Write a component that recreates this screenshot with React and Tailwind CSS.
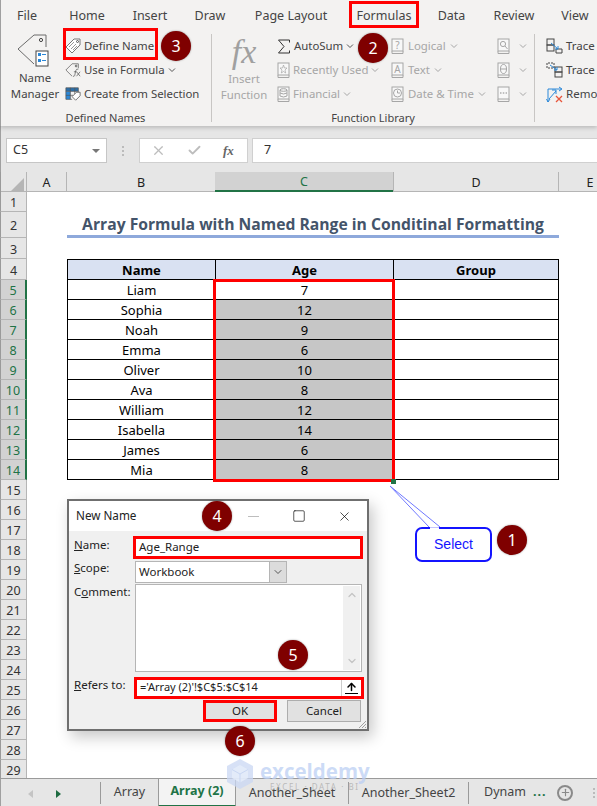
import React from "react";
import { ChevronDown, X, Check, Square, ArrowUp, Plus, ChevronUp } from "lucide-react";

const Badge = ({ n, className }) => (
  <div className={`absolute w-[30px] h-[30px] rounded-full bg-[#7f0000] text-white text-[16px] flex items-center justify-center shadow-[0_0_2px_rgba(0,0,0,0.4)] ${className}`}>{n}</div>
);

const Chev = ({ c = "#666" }) => (
  <svg width="8" height="6" viewBox="0 0 8 6" className="shrink-0"><path d="M1 1.5 L4 4.5 L7 1.5" fill="none" stroke={c} strokeWidth="1" /></svg>
);

const Book = ({ children }) => (
  <svg width="13" height="17" viewBox="0 0 13 17" className="shrink-0">
    <rect x="1" y="1" width="11" height="12" fill="#f8f8f8" stroke="#a6a6a6" />
    <path d="M1 13 V15.5 H12 V13" fill="none" stroke="#a6a6a6" />
    {children}
  </svg>
);

const NameManagerIcon = () => (
  <svg width="38" height="38" viewBox="0 0 38 38" className="-mt-[2px]">
    <path d="M2 17 L18 3 H30 V15 M18 32 L2 17" fill="none" stroke="#6b6b6b" strokeWidth="1" />
    <circle cx="25" cy="8" r="1.6" fill="none" stroke="#444" />
    <rect x="20" y="19" width="12" height="15" fill="#fff" stroke="#444" />
    <rect x="22" y="21" width="3" height="3" fill="#2b88d8" />
    <rect x="22" y="27" width="3" height="3" fill="#2b88d8" />
    <path d="M26 22.5 H30 M26 28.5 H30" stroke="#2b88d8" />
  </svg>
);
const TagIcon = () => (
  <svg width="16" height="16" viewBox="0 0 16 16" className="shrink-0">
    <path d="M1 9 L9 1 H15 V7 L7 15 Z" fill="#fff" stroke="#777" />
    <path d="M4 9 L9 4 M6 11 L11 6 M8 12 L12 8" stroke="#999" />
    <circle cx="12.5" cy="3.5" r="1" fill="none" stroke="#555" />
  </svg>
);
const UseIcon = () => (
  <svg width="16" height="16" viewBox="0 0 18 18" className="shrink-0">
    <path d="M1 9 L8 2 H15 V7 M8 16 L1 9" fill="none" stroke="#777" />
    <circle cx="12.5" cy="4.5" r="1" fill="none" stroke="#555" />
    <path d="M15 8 Q12.5 7.5 12 10 L11 15 Q10.5 16.5 9 16 M10 11 H13 M13 11 L17 16 M17 11 L13 16" fill="none" stroke="#555" strokeWidth=".8" />
  </svg>
);
const CreateIcon = () => (
  <svg width="16" height="16" viewBox="0 0 18 16" className="shrink-0">
    <rect x="1" y="1" width="14" height="4" fill="#2b6ea8" />
    <rect x="1" y="5" width="5" height="9" fill="#2b88d8" />
    <path d="M1 1 H15 V8 M1 1 V14 H8 M6 1 V14 M11 1 V8 M1 5 H15 M1 9.5 H9" fill="none" stroke="#555" strokeWidth=".8" />
    <path d="M8 11 L13 6 H17 V10 L12 15 Z" fill="#fff" stroke="#666" />
  </svg>
);
const Sigma = () => (
  <svg width="14" height="15" viewBox="0 0 14 15" className="shrink-0">
    <path d="M12.5 3.5 V1 H1.5 L7 7.5 L1.5 14 H12.5 V11.5" fill="none" stroke="#333" strokeWidth="1" />
  </svg>
);
const TraceA = () => (
  <svg width="17" height="16" viewBox="0 0 17 16" className="shrink-0">
    <rect x="1" y="1" width="7" height="6" fill="none" stroke="#444" />
    <rect x="1" y="7" width="7" height="6" fill="none" stroke="#444" />
    <path d="M10 15 V11 H16 V15 H10" fill="none" stroke="#444" />
    <path d="M5 5 L12 11 M12 8 V11 H9" fill="none" stroke="#2b88d8" />
  </svg>
);
const TraceB = () => (
  <svg width="17" height="16" viewBox="0 0 17 16" className="shrink-0">
    <path d="M1 6 V1 H8 V6 Z" fill="none" stroke="#444" strokeDasharray="2 1" />
    <rect x="9" y="5" width="7" height="5" fill="none" stroke="#444" />
    <rect x="9" y="10" width="7" height="5" fill="none" stroke="#444" />
    <path d="M4 3 L11 8 M11 5 V8 H8" fill="none" stroke="#2b88d8" />
  </svg>
);
const Remove = () => (
  <svg width="18" height="17" viewBox="0 0 18 17" className="shrink-0">
    <path d="M2 16 V3 H15 M13 1 L16 3 L13 5 M0.5 13 L2 16 L4 13 M3 13 L10 5 M6 4 H10 V8" fill="none" stroke="#2b88d8" />
    <path d="M10 10 L16 16 M16 10 L10 16" stroke="#e8553a" strokeWidth="1.3" />
  </svg>
);

const SmallBtn = ({ icon, label, chev, dim, extra = "gap-[3px]" }) => (
  <div className={`h-[24px] flex items-center whitespace-nowrap ${dim ? "text-[#a6a6a6]" : "text-[#444]"} ${extra}`}>
    {icon}
    {label && <span>{label}</span>}
    {chev && <Chev c={dim ? "#a6a6a6" : "#555"} />}
  </div>
);

const Tab = ({ children, w, active }) => (
  <div className={`flex items-center justify-center h-[27px] pt-[3px] shrink-0 text-[#444] text-[12.5px] ${w} ${active ? "outline-[3px] outline outline-[#ff0000] -outline-offset-[3px]" : ""}`}>{children}</div>
);

const Ribbon = () => (
  <div className="h-[126px] bg-[#f3f2f1] shadow-[0_2px_4px_rgba(0,0,0,0.18),inset_1px_0_0_#a0a0a0] relative z-10 text-[11.4px] shrink-0">
    <div className="h-[30px] flex items-start pt-[1px]">
      <Tab w="w-[54px]">File</Tab>
      <Tab w="w-[66px]">Home</Tab>
      <Tab w="w-[60px]">Insert</Tab>
      <Tab w="w-[60px]">Draw</Tab>
      <Tab w="w-[102px]">Page Layout</Tab>
      <div className="w-[7px] shrink-0" />
      <Tab w="w-[70px]" active>Formulas</Tab>
      <Tab w="w-[65px]">Data</Tab>
      <Tab w="w-[60px]">Review</Tab>
      <Tab w="w-[62px]">View</Tab>
    </div>
    <div className="h-[96px] flex pt-[4px]">
      <div className="w-[212px] shrink-0 flex flex-col border-r border-[#c8c6c4] h-[88px]">
        <div className="flex h-[72px]">
          <div className="w-[62px] pl-[8px] flex flex-col items-center text-[#444] leading-[16px] shrink-0">
            <NameManagerIcon />
            <span>Name</span>
            <span>Manager</span>
          </div>
          <div className="flex flex-col pl-[3px]">
            <SmallBtn icon={<TagIcon />} label="Define Name" />
            <SmallBtn icon={<UseIcon />} label="Use in Formula" chev />
            <SmallBtn icon={<CreateIcon />} label="Create from Selection" />
          </div>
        </div>
        <div className="text-center text-[#444] text-[11px] mt-[4px]">Defined Names</div>
      </div>
      <div className="w-[323px] shrink-0 flex flex-col border-r border-[#c8c6c4] h-[88px]">
        <div className="flex h-[72px]">
          <div className="w-[64px] flex flex-col items-center text-[#a6a6a6] leading-[16px] shrink-0">
            <span className="font-['Liberation_Serif',serif] italic text-[34px] leading-[36px] text-[#a0a0a0]">fx</span>
            <span className="mt-[1px]">Insert</span>
            <span>Function</span>
          </div>
          <div className="flex flex-col w-[115px] shrink-0 pl-[1px]">
            <SmallBtn icon={<Sigma />} label="AutoSum" chev extra="gap-[3px]" />
            <SmallBtn dim icon={<Book><path d="M6.5 3 L7.5 6 H10 L8 8 L8.7 11 L6.5 9.5 L4.3 11 L5 8 L3 6 H5.5 Z" fill="none" stroke="#a6a6a6" strokeWidth=".7" /></Book>} label="Recently Used" chev />
            <SmallBtn dim icon={<Book><ellipse cx="6.5" cy="4" rx="3.5" ry="1.3" fill="none" stroke="#a6a6a6" /><path d="M3 4 V10 Q6.5 12 10 10 V4 M3 7 Q6.5 9 10 7" fill="none" stroke="#a6a6a6" /></Book>} label="Financial" chev />
          </div>
          <div className="flex flex-col w-[106px] shrink-0">
            <SmallBtn dim extra="gap-[4px]" icon={<Book><text x="6.5" y="11" textAnchor="middle" fontSize="10" fill="#a6a6a6">?</text></Book>} label="Logical" chev />
            <SmallBtn dim extra="gap-[4px]" icon={<Book><text x="6.5" y="11" textAnchor="middle" fontSize="10" fill="#a6a6a6">A</text></Book>} label="Text" chev />
            <SmallBtn dim extra="gap-[4px]" icon={<Book><circle cx="6.5" cy="7" r="4" fill="none" stroke="#a6a6a6" /><path d="M6.5 4.5 V7 H9" fill="none" stroke="#a6a6a6" /></Book>} label="Date & Time" chev />
          </div>
          <div className="flex flex-col shrink-0">
            <SmallBtn dim extra="gap-[9px]" icon={<Book><circle cx="6" cy="6" r="2.6" fill="none" stroke="#a6a6a6" /><path d="M8 8 L10.5 11" stroke="#a6a6a6" /></Book>} chev />
            <SmallBtn dim extra="gap-[9px]" icon={<Book><ellipse cx="6.5" cy="7" rx="3" ry="4.5" fill="none" stroke="#a6a6a6" /><path d="M3.5 7 H9.5" stroke="#a6a6a6" /></Book>} chev />
            <SmallBtn dim extra="gap-[9px]" icon={<Book><path d="M3 7 H4.5 M5.8 7 H7.3 M8.6 7 H10" stroke="#888" /></Book>} chev />
          </div>
        </div>
        <div className="text-center text-[#444] text-[11px] mt-[4px]">Function Library</div>
      </div>
      <div className="pl-[11px] flex flex-col text-[11.5px]">
        <SmallBtn icon={<TraceA />} label="Trace" extra="gap-[3px]" />
        <SmallBtn icon={<TraceB />} label="Trace" extra="gap-[3px]" />
        <SmallBtn icon={<Remove />} label="Remo" extra="gap-[2px]" />
      </div>
    </div>
  </div>
);

const FormulaBar = () => (
  <div className="h-[46px] bg-[#e6e6e6] shadow-[inset_1px_0_0_#a0a0a0] flex items-start pt-[12px] pl-[6px] shrink-0 text-[12.5px] text-[#333]">
    <div className="w-[101px] h-[25px] bg-white border border-[#c6c6c6] flex items-center justify-between pl-[6px] pr-[6px] shrink-0">
      <span>C5</span>
      <span className="w-0 h-0 border-l-[4px] border-r-[4px] border-t-[4px] border-l-transparent border-r-transparent border-t-[#777]" />
    </div>
    <div className="w-[32px] h-[25px] flex items-center justify-center flex-col shrink-0">
      <span className="w-[2px] h-[2px] bg-[#bbb] mb-[2px]" />
      <span className="w-[2px] h-[2px] bg-[#bbb] mb-[2px]" />
      <span className="w-[2px] h-[2px] bg-[#bbb]" />
    </div>
    <div className="w-[109px] h-[25px] bg-white border border-[#d0d0d0] flex items-center shrink-0 pl-[11px]">
      <X size={15} className="text-[#bdbdbd]" strokeWidth={2} />
      <Check size={15} className="text-[#bdbdbd] ml-[21px]" strokeWidth={3} />
      <span className="ml-[21px] font-['Liberation_Serif',serif] italic font-bold text-[13px] text-[#666]">fx</span>
    </div>
    <div className="ml-[4px] flex-1 h-[25px] bg-white border border-[#d0d0d0] border-r-0 flex items-center pl-[11px]">7</div>
  </div>
);

const cols = "grid grid-cols-[27px_40px_148px_178px_166px_62px]";
const data = [["Liam", 7], ["Sophia", 12], ["Noah", 9], ["Emma", 6], ["Oliver", 10], ["Ava", 8], ["William", 12], ["Isabella", 14], ["James", 6], ["Mia", 8]];

const RowHead = ({ n, on }) => (
  <div className={`flex items-center justify-center pt-[4px] border-b border-[#b5b5b5] border-l border-l-[#9a9a9a] text-[12.5px] ${on ? "bg-[#d2d2d2] text-[#217346] border-r-2 border-r-[#217346]" : "bg-[#e6e6e6] text-[#333] border-r border-r-[#b5b5b5]"}`}>{n}</div>
);

const Sheet = () => {
  const rows = [];
  for (let i = 15; i <= 29; i++) {
    rows.push(<div key={i} className={`${cols} grid-rows-[20px]`}><RowHead n={i} /></div>);
  }
  return (
    <div className="flex-1 relative overflow-hidden bg-white text-[13px] text-black">
      <div className={`${cols} grid-rows-[20px] bg-[#e6e6e6] text-[12.5px] text-[#222] border-b border-[#b5b5b5] h-[20px]`}>
        <div className="border-r border-l border-r-[#b5b5b5] border-l-[#9a9a9a] flex items-end justify-end pr-[2px] pb-[1px]">
          <svg width="13" height="13" viewBox="0 0 13 13"><path d="M13 0 V13 H0 Z" fill="#b5b5b5" /></svg>
        </div>
        <div className="flex items-center justify-center pt-[2px] border-r border-[#b5b5b5]">A</div>
        <div className="flex items-center justify-center pt-[2px]">B</div>
        <div className="flex items-center justify-center pt-[2px] bg-[#d2d2d2] border-b-2 border-[#217346] text-[#217346]">C</div>
        <div className="flex items-center justify-center pt-[2px] border-r border-l border-[#b5b5b5]">D</div>
        <div className="flex items-center justify-center pt-[2px]">E</div>
      </div>
      <div className={`${cols} grid-rows-[20px]`}><RowHead n={1} /></div>
      <div className={`${cols} grid-rows-[26px]`}>
        <RowHead n={2} />
        <div />
        <div className="col-span-3 flex items-center justify-center pt-[2px] border-b-[3px] border-[#8ea9db] text-[#44546a] font-bold text-[15.7px] font-['Open_Sans',sans-serif] whitespace-nowrap">Array Formula with Named Range in Conditinal Formatting</div>
      </div>
      <div className={`${cols} grid-rows-[21px]`}><RowHead n={3} /></div>
      <div className={`${cols} grid-rows-[21px]`}>
        <RowHead n={4} />
        <div />
        <div className="bg-[#d9e1f2] border-y border-l border-black font-bold flex items-center justify-center pt-[3px]">Name</div>
        <div className="bg-[#d9e1f2] border-y border-l border-black font-bold flex items-center justify-center pt-[3px]">Age</div>
        <div className="bg-[#d9e1f2] border border-black font-bold flex items-center justify-center pt-[3px]">Group</div>
      </div>
      {data.map(([name, age], i) => (
        <div key={name} className={`${cols} grid-rows-[20px]`}>
          <RowHead n={i + 5} on />
          <div />
          <div className="border-b border-l border-black flex items-center justify-center pt-[3px]">{name}</div>
          <div className={`border-b border-l border-black flex items-center justify-center pt-[3px] ${i === 0 ? "bg-white" : "bg-[#c6c6c6]"}`}>{age}</div>
          <div className="border-b border-x border-black" />
        </div>
      ))}
      {rows}

      <div className="absolute left-[213px] top-[107px] w-[182px] h-[203px] border-[3px] border-[#ff0000]" />
      <div className="absolute left-[391px] top-[307px] w-[5px] h-[5px] bg-[#217346]" />
    </div>
  );
};

const Field = ({ className = "", children }) => (
  <div className={`bg-white flex items-center ${className}`}>{children}</div>
);

const Dialog = () => (
  <div className="absolute left-[67px] top-[499px] w-[302px] h-[232px] border-2 border-[#6f6f6f] bg-[#f0f0f0] shadow-[4px_6px_14px_rgba(0,0,0,0.22)] text-[11.5px] text-[#222] flex flex-col">
    <div className="h-[30px] bg-white flex items-center pl-[7px] shrink-0 text-[11.7px]">
      <span>New Name</span>
      <span className="ml-auto w-[11px] h-px bg-[#bdbdbd] mr-[33px]" />
      <Square size={14} strokeWidth={1.1} className="text-black mr-[31px]" />
      <X size={15} strokeWidth={1.1} className="text-black mr-[15px]" />
    </div>
    <div className="flex flex-col pl-[5px] pt-[4px]">
      <div className="flex h-[24px] items-center">
        <span className="w-[59px] shrink-0 -mt-[4px]"><u>N</u>ame:</span>
        <Field className="w-[230px] h-[23px] border-[3px] border-[#ff0000] pl-[3px]">Age_Range</Field>
      </div>
      <div className="flex h-[25px] items-center">
        <span className="w-[61px] shrink-0 -mt-[8px]"><u>S</u>cope:</span>
        <Field className="w-[152px] h-[22px] border border-[#b5b5b5] pl-[3px]">
          <span className="flex-1">Workbook</span>
          <span className="w-[17px] h-[20px] bg-[#dcdcdc] border-l border-[#b5b5b5] flex items-center justify-center">
            <ChevronDown size={12} className="text-[#555]" />
          </span>
        </Field>
      </div>
      <div className="flex h-[91px] items-start">
        <span className="w-[61px] shrink-0 -mt-[1px]">C<u>o</u>mment:</span>
        <Field className="w-[227px] h-[88px] border border-[#b5b5b5] justify-end">
          <span className="w-[17px] h-[84px] mr-[1px] bg-[#f0f0f0] flex flex-col items-center justify-between py-[3px]">
            <ChevronUp size={12} strokeWidth={2.5} className="text-[#c4c4c4]" />
            <ChevronDown size={12} strokeWidth={2.5} className="text-[#c4c4c4]" />
          </span>
        </Field>
      </div>
      <div className="flex h-[24px] items-center">
        <span className="w-[60px] shrink-0 -mt-[5px]"><u>R</u>efers to:</span>
        <Field className="w-[230px] h-[22px] mt-[1px] border-[3px] border-[#ff0000] pl-[3px]">
          <span className="flex-1 text-[11px]">='Array (2)'!$C$5:$C$14</span>
          <span className="w-[20px] h-[16px] border-l border-[#ccc] flex items-center justify-center">
            <ArrowUp size={13} strokeWidth={3} className="text-black border-b border-black" />
          </span>
        </Field>
      </div>
      <div className="flex h-[24px] items-center pl-[129px] gap-[10px] text-[11.5px]">
        <div className="w-[74px] h-[22px] bg-[#e1e1e1] border-[3px] border-[#ff0000] flex items-center justify-center">OK</div>
        <div className="w-[74px] h-[22px] bg-[#e1e1e1] border border-[#adadad] flex items-center justify-center">Cancel</div>
      </div>
    </div>
    <svg width="9" height="9" viewBox="0 0 9 9" className="absolute right-0 bottom-0">
      <path d="M8 1 L1 8 M8 4 L4 8 M8 7 L7 8" stroke="#a0a0a0" />
    </svg>
  </div>
);

const Callout = () => (
  <>
    <div className="absolute left-[415px] top-[527px] w-[77px] h-[35px] rounded-[7px] border-2 border-[#1414ff] bg-white flex items-center justify-center text-[14px] text-[#1414ff] font-['Liberation_Sans',sans-serif]">Select</div>
    <svg width="60" height="48" viewBox="0 0 60 48" className="absolute left-[385px] top-[482px]">
      <path d="M5 4 L44 45 L55 45 Z" fill="#fff" stroke="none" />
      <path d="M5 4 L44 45 M5 4 L55 45" stroke="#6f78ff" strokeWidth="1" fill="none" />
      <path d="M45 46.5 H54" stroke="#fff" strokeWidth="2.5" />
    </svg>
  </>
);

const SheetTabs = () => (
  <div className="h-[28px] bg-[#e6e6e6] shadow-[inset_1px_0_0_#a0a0a0] border-t border-[#9a9a9a] flex items-center shrink-0 relative text-[12.5px] text-[#444] overflow-hidden">
    <svg width="6" height="8" viewBox="0 0 6 8" className="absolute left-[28px] top-[11px]"><path d="M5 0 L0 4 L5 8 Z" fill="#c4c4c4" /></svg>
    <svg width="6" height="8" viewBox="0 0 6 8" className="absolute left-[56px] top-[11px]"><path d="M0 0 L5 4 L0 8 Z" fill="#1d6b41" /></svg>
    <div className="w-[101px] shrink-0 h-[22px] border-r border-[#9a9a9a]" />
    <div className="w-[57px] shrink-0 text-center">Array</div>
    <div className="w-[78px] shrink-0 h-[28px] bg-[#f3f3f3] border-x border-[#9a9a9a] border-b-2 border-b-[#217346] flex items-center justify-center font-bold text-[#217346]">Array (2)</div>
    <div className="w-[113px] shrink-0 text-center h-[22px] border-r border-[#9a9a9a] leading-[22px]">Another_Sheet</div>
    <div className="w-[120px] shrink-0 text-center h-[22px] border-r border-[#9a9a9a] leading-[22px]">Another_Sheet2</div>
    <div className="pl-[15px] w-[64px] shrink-0 overflow-hidden whitespace-nowrap">Dynam</div>
    <div className="font-bold text-[#217346] tracking-[1px] w-[20px] shrink-0 -mt-[1px]">...</div>
    <div className="w-[16px] h-[16px] rounded-full border-2 border-[#8a8a8a] flex items-center justify-center shrink-0 ml-[4px]">
      <Plus size={11} strokeWidth={2.5} className="text-[#8a8a8a]" />
    </div>
    <div className="ml-[20px] flex flex-col gap-[2px] shrink-0">
      <span className="w-[2px] h-[2px] bg-[#bbb]" />
      <span className="w-[2px] h-[2px] bg-[#bbb]" />
      <span className="w-[2px] h-[2px] bg-[#bbb]" />
    </div>
  </div>
);

const Watermark = () => (
  <div className="absolute left-[227px] top-[759px] flex items-start pointer-events-none">
    <svg width="26" height="30" viewBox="0 0 26 30">
      <path d="M13 0 L26 7 V23 L13 30 L0 23 V7 Z" fill="#c9d7f3" fillOpacity=".75" />
      <path d="M13 6 L21 10.5 V19 L13 23.5 L5 19 V10.5 Z" fill="#e6edfa" fillOpacity=".8" />
      <path d="M5 10.5 L13 15 L21 10.5 M13 15 V23.5" fill="none" stroke="#c9d7f3" strokeWidth="1" />
    </svg>
    <div className="flex flex-col items-center ml-[7px] mt-[2px]">
      <span className="text-[20.5px] leading-[21px] font-bold text-[#bccff4]/75 font-['Open_Sans',sans-serif]">exceldemy</span>
      <span className="text-[8px] leading-[10px] text-[#adadad]/80 tracking-[1.6px] whitespace-nowrap">EXCEL · DATA · BI</span>
    </div>
  </div>
);

export default function App() {
  return (
    <div className="relative w-[597px] h-[806px] overflow-hidden flex flex-col bg-white font-['Noto_Sans',sans-serif]">
      <Ribbon />
      <FormulaBar />
      <Sheet />
      <SheetTabs />
      <Dialog />
      <Callout />
      <Watermark />
      <Badge n="3" className="left-[161px] top-[31px] z-20" />
      <Badge n="2" className="left-[358px] top-[33px] z-20" />
      <Badge n="1" className="left-[497px] top-[525px]" />
      <Badge n="4" className="left-[202px] top-[501px]" />
      <Badge n="5" className="left-[278px] top-[640px]" />
      <Badge n="6" className="left-[225px] top-[726px]" />
      <div className="absolute left-[63px] top-[28px] w-[95px] h-[32px] border-[3px] border-[#ff0000] z-20" />
    </div>
  );
}
